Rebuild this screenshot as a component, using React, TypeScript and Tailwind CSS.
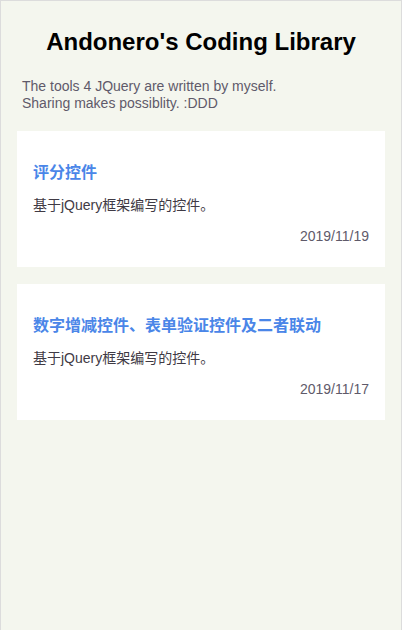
const posts = [
  { title: "评分控件", desc: "基于jQuery框架编写的控件。", date: "2019/11/19" },
  {
    title: "数字增减控件、表单验证控件及二者联动",
    desc: "基于jQuery框架编写的控件。",
    date: "2019/11/17",
  },
];

const font = {
  fontFamily: '"Liberation Sans", Arial, "Noto Sans CJK SC", sans-serif',
};

export default function App() {
  return (
    <div
      className="min-h-[630px] bg-[#f4f6ee] border-x border-t border-[#dcdcdc] px-4"
      style={font}
    >
      <h1 className="pt-[27px] text-center text-[24px] font-bold leading-[28px] text-black">
        Andonero&apos;s Coding Library
      </h1>
      <p className="mt-[22px] px-[5px] text-[14px] leading-[17px] text-[#5f5a6a]">
        The tools 4 JQuery are written by myself.
        <br />
        Sharing makes possiblity. :DDD
      </p>
      <div className="mt-[19px] flex flex-col gap-[17px]">
        {posts.map((p) => (
          <div key={p.date} className="bg-white px-4 pt-[32px] pb-[22px]">
            <h2 className="text-[16px] font-bold leading-[20px] text-[#4a86e8]">
              {p.title}
            </h2>
            <p className="mt-[14px] text-[14px] leading-[17px] text-[#3f3a44]">
              {p.desc}
            </p>
            <p className="mt-[14px] text-right text-[14px] leading-[17px] text-[#5f5a6a]">
              {p.date}
            </p>
          </div>
        ))}
      </div>
    </div>
  );
}
